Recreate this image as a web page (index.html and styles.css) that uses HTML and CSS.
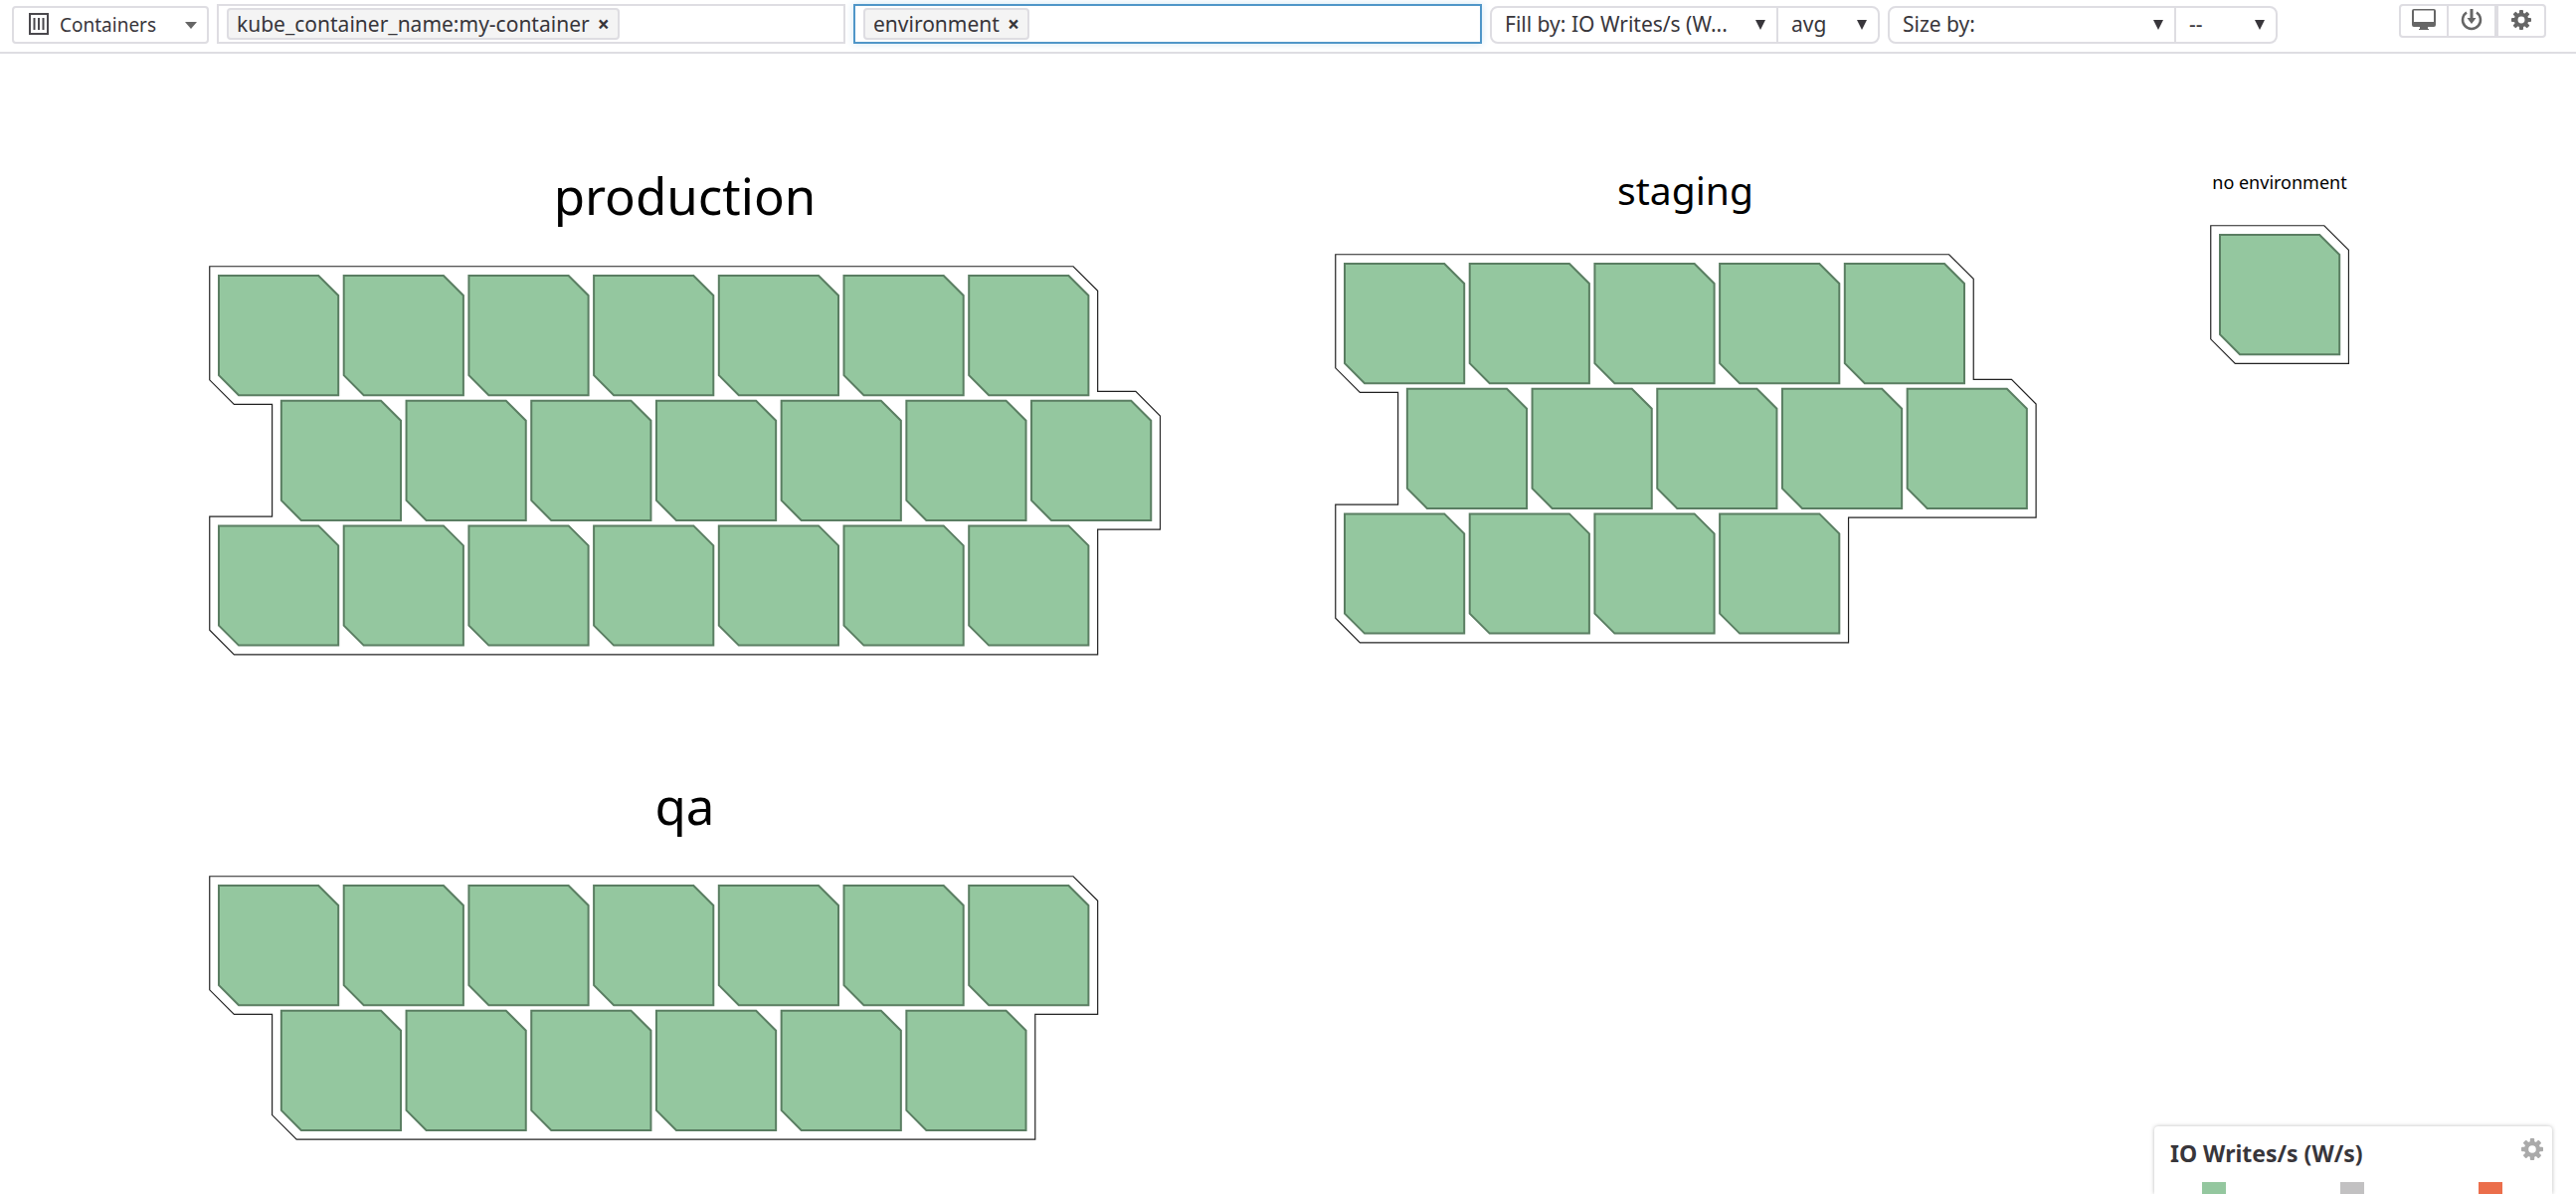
FILE: index.html
```html
<!DOCTYPE html>
<html lang="en">
<head>
<meta charset="utf-8">
<title>Container Map</title>
<link rel="stylesheet" href="styles.css">
</head>
<body>
<svg class="defs" aria-hidden="true">
  <defs>
    <path id="cell" class="cell" d="M0 0H100.2L120.2 20V120.2H20L0 100.2Z"/>
    <g id="row4"><use href="#cell"/><use href="#cell" x="125.7"/><use href="#cell" x="251.4"/><use href="#cell" x="377.1"/></g>
    <g id="row5"><use href="#row4"/><use href="#cell" x="502.8"/></g>
    <g id="row6"><use href="#row5"/><use href="#cell" x="628.5"/></g>
    <g id="row7"><use href="#row6"/><use href="#cell" x="754.2"/></g>
    <path id="triangle" d="M0 0H10L5 10Z"/>
    <g id="gear">
      <path fill-rule="evenodd" d="M11 3a8 8 0 1 0 0 16 8 8 0 0 0 0-16ZM11 7.200a3.800 3.800 0 1 1 0 7.600 3.800 3.800 0 0 1 0-7.600Z"/>
      <g id="teeth">
        <rect id="tooth" x="8.8" y="0" width="4.4" height="5" rx="1"/>
        <use href="#tooth" transform="rotate(45 11 11)"/>
        <use href="#tooth" transform="rotate(90 11 11)"/>
        <use href="#tooth" transform="rotate(135 11 11)"/>
      </g>
      <use href="#teeth" transform="rotate(180 11 11)"/>
    </g>
  </defs>
</svg>

<header class="toolbar">
  <button class="scope" type="button">
    <svg class="scope-icon" width="20" height="22" viewBox="0 0 20 22" aria-hidden="true"><path d="M1 1H19V21H1ZM5.500 5V17M10 5V17M14.500 5V17"/></svg>
    <span>Containers</span>
    <svg class="scope-arrow" width="12" height="8" viewBox="0 0 12 8" aria-hidden="true"><path d="M0 1H12L6 8Z"/></svg>
  </button>

  <div class="field">
    <span class="chip">kube_container_name:my-container<button class="chip-remove" type="button" aria-label="Remove filter">×</button></span>
    <input class="field-input" type="text" aria-label="Filter by">
  </div>
  <div class="field field-active">
    <span class="chip">environment<button class="chip-remove" type="button" aria-label="Remove group">×</button></span>
    <input class="field-input" type="text" aria-label="Group by">
  </div>

  <div class="pair">
    <div class="pick pick-wide">
      <select class="select" aria-label="Fill by metric"><option>Fill by: IO Writes/s (W...</option></select>
      <svg class="pick-arrow" width="10" height="10" viewBox="0 0 10 10" aria-hidden="true"><use href="#triangle"/></svg>
    </div>
    <div class="pick pick-narrow">
      <select class="select" aria-label="Fill by aggregation"><option>avg</option></select>
      <svg class="pick-arrow" width="10" height="10" viewBox="0 0 10 10" aria-hidden="true"><use href="#triangle"/></svg>
    </div>
  </div>
  <div class="pair">
    <div class="pick pick-wide">
      <select class="select" aria-label="Size by metric"><option>Size by:</option></select>
      <svg class="pick-arrow" width="10" height="10" viewBox="0 0 10 10" aria-hidden="true"><use href="#triangle"/></svg>
    </div>
    <div class="pick pick-narrow">
      <select class="select" aria-label="Size by aggregation"><option>--</option></select>
      <svg class="pick-arrow" width="10" height="10" viewBox="0 0 10 10" aria-hidden="true"><use href="#triangle"/></svg>
    </div>
  </div>

  <div class="tools">
    <button class="tool" type="button" aria-label="Full screen">
      <svg width="24" height="22" viewBox="0 0 24 22" aria-hidden="true"><path fill-rule="evenodd" d="M2 0H22Q24 0 24 2V16Q24 18 22 18H16V20H17V21H7V20H8V18H2Q0 18 0 16V2Q0 0 2 0ZM2 1.500V13H22V1.500Z"/></svg>
    </button>
    <button class="tool" type="button" aria-label="Export">
      <svg width="22" height="22" viewBox="0 0 22 22" aria-hidden="true"><path d="M9.500 0H12.500V9H15.500L11 15 6.500 9H9.500Z"/><path class="ring" d="M6 3.500A9 9 0 1 0 16 3.500"/></svg>
    </button>
    <button class="tool tool-settings" type="button" aria-label="Settings">
      <svg width="22" height="22" viewBox="0 0 22 22" aria-hidden="true"><use href="#gear"/></svg>
    </button>
  </div>
</header>

<main class="map">
  <div class="column">
    <section class="group">
      <h2 class="title title-large">production</h2>
      <svg class="cells" width="957" height="392" viewBox="0 0 957 392" role="img" aria-label="21 containers">
        <path class="outline" d="M.75 .75H869.050L893.650 25.350V126.450H931.900L956.500 151.050V265.150H893.650V390.850H25.350L.75 366.250V252.150H63.600V139.450H25.350L.75 114.850Z"/>
        <use href="#row7" x="10" y="10"/><use href="#row7" x="72.85" y="135.7"/><use href="#row7" x="10" y="261.4"/>
      </svg>
    </section>
    <section class="group">
      <h2 class="title title-large">qa</h2>
      <svg class="cells" width="957" height="266" viewBox="0 0 957 266" role="img" aria-label="13 containers">
        <path class="outline" d="M.75 .75H869.050L893.650 25.350V139.450H830.800V265.150H88.200L63.600 240.550V139.450H25.350L.75 114.850Z"/>
        <use href="#row7" x="10" y="10"/><use href="#row6" x="72.85" y="135.7"/>
      </svg>
    </section>
  </div>
  <div class="column">
    <section class="group">
      <h2 class="title title-medium">staging</h2>
      <svg class="cells" width="706" height="392" viewBox="0 0 706 392" role="img" aria-label="14 containers">
        <path class="outline" d="M.75 .75H617.650L642.250 25.350V126.450H680.500L705.100 151.050V265.150H516.550V390.850H25.350L.75 366.250V252.150H63.600V139.450H25.350L.75 114.850Z"/>
        <use href="#row5" x="10" y="10"/><use href="#row5" x="72.85" y="135.7"/><use href="#row4" x="10" y="261.4"/>
      </svg>
    </section>
  </div>
  <div class="column">
    <section class="group">
      <h2 class="title title-small">no environment</h2>
      <svg class="cells" width="140" height="140" viewBox="0 0 140 140" role="img" aria-label="1 container">
        <path class="outline" d="M.75 .75H114.850L139.450 25.350V139.450H25.350L.75 114.850Z"/>
        <use href="#cell" x="10" y="10"/>
      </svg>
    </section>
  </div>
</main>

<aside class="legend">
  <div class="legend-head">
    <h3 class="legend-title">IO Writes/s (W/s)</h3>
    <button class="legend-settings" type="button" aria-label="Legend settings">
      <svg width="22" height="22" viewBox="0 0 22 22" aria-hidden="true"><use href="#gear"/></svg>
    </button>
  </div>
  <div class="legend-scale">
    <span class="swatch swatch-low"></span>
    <span class="swatch swatch-mid"></span>
    <span class="swatch swatch-high"></span>
  </div>
</aside>
</body>
</html>
```
FILE: styles.css
```css
* { box-sizing: border-box; }

body {
  position: relative;
  min-height: 100vh;
  margin: 0;
  background: #fff;
  color: #38363b;
  font-family: "Noto Sans", sans-serif;
  font-size: 21px;
}

button, input, select {
  margin: 0;
  padding: 0;
  border: 0;
  background: none;
  color: inherit;
  font: inherit;
}

h2, h3 { margin: 0; }
svg { display: block; }
.defs { position: absolute; width: 0; height: 0; }

/* Toolbar */
.toolbar {
  display: flex;
  align-items: flex-start;
  gap: 8px;
  height: 54px;
  padding: 4px 30px 0 12px;
  border-bottom: 2px solid #dedde2;
}

.scope {
  display: flex;
  align-items: center;
  width: 198px;
  height: 38px;
  margin-top: 2px;
  padding: 0 10px 0 15px;
  border: 2px solid #dedde2;
  border-radius: 4px;
  font-size: 19px;
  line-height: 32px;
}
.scope-icon {
  margin: 0 11px 2px 0;
  fill: none;
  stroke: #4a484d;
  stroke-width: 2;
}
.scope-arrow { margin-left: auto; fill: #666; }

.field {
  display: flex;
  flex: 1;
  align-items: center;
  min-width: 0;
  height: 40px;
  padding: 0 8px;
  border: 2px solid #dedde2;
}
.field-active {
  border-color: #4f96c8;
  box-shadow: 0 0 8px #cfe6f5;
}
.field-input { flex: 1; min-width: 0; outline: 0; }

.chip {
  display: flex;
  align-items: center;
  height: 32px;
  padding: 0 8px;
  border: 2px solid #dedde2;
  border-radius: 4px;
  background: #f4f4f4;
  line-height: 28px;
  white-space: nowrap;
}
.chip-remove {
  width: 12px;
  margin-left: 8px;
  font-weight: 700;
  line-height: 28px;
}

.pair {
  display: flex;
  width: 392px;
  height: 38px;
  margin-top: 2px;
  border: 2px solid #dedde2;
  border-radius: 8px;
}
.pick { display: grid; align-items: center; }
.pick > * { grid-area: 1 / 1; }
.pick-wide { flex: 1; }
.pick-narrow { width: 102px; border-left: 2px solid #dedde2; }
.select {
  width: 100%;
  height: 34px;
  padding: 0 0 2px 13px;
  appearance: none;
}
.pick-arrow {
  justify-self: end;
  margin-right: 11px;
  fill: #38363b;
  pointer-events: none;
}

.tools {
  display: flex;
  width: 148px;
  height: 34px;
  margin-left: 114px;
  border: 2px solid #dedde2;
  border-radius: 4px;
}
.tool {
  display: grid;
  width: 46px;
  padding-bottom: 2px;
  place-items: center;
  fill: #666;
}
.tool + .tool { width: 48px; border-left: 2px solid #dedde2; }
.tool + .tool-settings { width: 50px; border-left-width: 4px; }
.tool-settings svg { width: 20px; height: 20px; }
.ring { fill: none; stroke: #666; stroke-width: 2.5; }

/* Container map */
.map {
  display: flex;
  justify-content: space-between;
  padding: 106px 228px 54px 210px;
}
.column { display: flex; flex-direction: column; gap: 114px; }
.title { color: #000; font-weight: 400; text-align: center; }
.title-large { margin-bottom: 35px; font-size: 51px; line-height: 72px; }
.title-medium { margin-bottom: 33px; font-size: 39px; line-height: 62px; }
.title-small { margin-bottom: 20px; font-size: 18px; line-height: 46px; }
.cell { fill: #94c79f; stroke: #5a7e62; stroke-width: 2; }
.outline { fill: #fff; stroke: #222; stroke-width: 1.2; }

/* Legend */
.legend {
  position: absolute;
  right: 24px;
  bottom: 0;
  width: 400px;
  padding: 12px 9px 0 16px;
  border-radius: 4px 4px 0 0;
  background: #fff;
  box-shadow: 0 0 4px #bbb;
}
.legend-head {
  display: flex;
  align-items: flex-start;
  justify-content: space-between;
  height: 44px;
}
.legend-title { font-size: 23px; line-height: 30px; }
.legend-settings { fill: #aaa; }
.legend-scale {
  display: flex;
  justify-content: space-between;
  padding: 0 41px 0 32px;
}
.swatch { width: 24px; height: 12px; }
.swatch-low { background: #94c79f; }
.swatch-mid { background: #c2c1c2; }
.swatch-high { background: #eb6e4b; }
```
